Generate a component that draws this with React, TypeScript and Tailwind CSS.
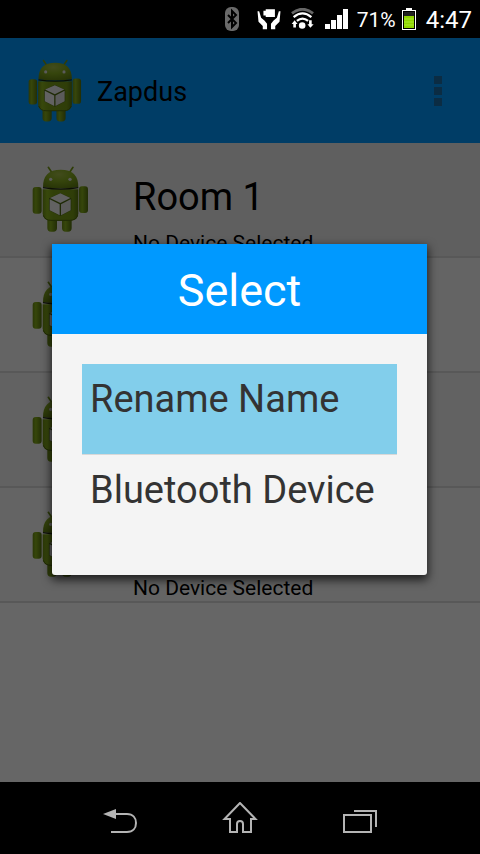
import React from "react";

type Room = { name?: string; status?: string };

const rooms: Room[] = [
  { name: "Room 1", status: "No Device Selected" },
  {},
  {},
  { status: "No Device Selected" },
];

function AndroidIcon({ className, id }: { className: string; id: string }) {
  const body = `body-${id}`;
  const limb = `limb-${id}`;
  const head = `head-${id}`;
  return (
    <svg viewBox="97 79 171 201" className={className} aria-hidden="true">
      <defs>
        <linearGradient id={body} x1="0" x2="1" y1="0" y2="0">
          <stop offset="0" stopColor="#6c8c14" />
          <stop offset="0.12" stopColor="#8cb41e" />
          <stop offset="0.3" stopColor="#7ca018" />
          <stop offset="0.85" stopColor="#769a16" />
          <stop offset="1" stopColor="#56720e" />
        </linearGradient>
        <linearGradient id={limb} x1="0" x2="1" y1="0" y2="0">
          <stop offset="0" stopColor="#6c8c14" />
          <stop offset="0.35" stopColor="#88b01c" />
          <stop offset="1" stopColor="#56720e" />
        </linearGradient>
        <radialGradient id={head} cx="0.45" cy="0.25" r="0.8">
          <stop offset="0" stopColor="#a4bc48" />
          <stop offset="0.45" stopColor="#86ac20" />
          <stop offset="1" stopColor="#628012" />
        </radialGradient>
      </defs>
      <path d="M146 83l10 15M220 83l-10 15" stroke="#769a16" strokeWidth="5" strokeLinecap="round" />
      <rect x="143" y="222" width="29" height="54" rx="11" fill={`url(#${limb})`} />
      <rect x="187" y="222" width="29" height="54" rx="11" fill={`url(#${limb})`} />
      <rect x="99" y="142" width="27" height="80" rx="9" fill={`url(#${limb})`} />
      <rect x="238" y="140" width="27" height="80" rx="9" fill={`url(#${limb})`} />
      <path d="M129 149h107v72q0 22-24 22h-58q-25 0-25-22z" fill={`url(#${body})`} />
      <path d="M131 227q5 15 23 15h57q18 0 23-15" fill="none" stroke="#4e680c" strokeWidth="3" />
      <path d="M130 142q0-52 53-52t53 52q-53 9-106 0z" fill={`url(#${head})`} />
      <path d="M130 144q53 9 106 0" fill="none" stroke="#1d2608" strokeWidth="4" />
      <circle cx="153" cy="119" r="5" fill="#e0e0e0" />
      <circle cx="211" cy="119" r="5" fill="#e0e0e0" />
      <path d="M182 160l33 16v36l-33 17-34-17v-36z" fill="#4e6a10" />
      <path d="M182 161l30 14-30 15-31-15z" fill="#f0f0f0" />
      <path d="M150 179l30 15v33l-30-15z" fill="#f4f4f4" />
      <path d="M213 179l-29 15v33l29-15z" fill="#e4e4e4" />
    </svg>
  );
}

function StatusBar() {
  return (
    <header className="flex h-[38px] shrink-0 items-center justify-end bg-black pr-2 text-white">
      <svg viewBox="0 0 14 24" className="mr-[18px] h-6 w-3.5" aria-label="Bluetooth">
        <rect width="14" height="24" rx="6" fill="#6a6a6a" />
        <path d="M3 8l8 8-4 4V4l4 4-8 8" fill="none" stroke="#000" strokeWidth="2" />
      </svg>
      <svg viewBox="170 28 72 64" className="mr-2.5 h-[21px] w-6" aria-label="Ultra data">
        <path d="M189 33h7v-4h28v23h-28v-4h-7z" fill="#fff" />
        <path d="M171 35h5l6 20 10 8 8 10v17h-13v-10l-13-13z" fill="#fff" />
        <path d="M241 35h-5l-6 20-10 8-8 10v17h13v-10l13-13z" fill="#fff" />
      </svg>
      <svg viewBox="270 24 70 66" className="mr-[11px] h-[22px] w-[23px]" aria-label="Wi-Fi">
        <path d="M273 40q32-25 64 0" fill="none" stroke="#666" strokeWidth="9" />
        <path d="M278 51q27-22 54 0M288 63q17-14 34 0" fill="none" stroke="#fff" strokeWidth="7" />
        <circle cx="304" cy="77" r="10" fill="#fff" />
        <path d="M281 61l9 11h-5v11h-8V72h-5zM329 84l-9-11h5V61h8v12h6z" fill="#fff" />
      </svg>
      <svg viewBox="0 0 23 20" className="mr-[9px] h-5 w-[23px]" aria-label="Signal">
        <path d="M0 15h5v5H0zM6 11h5v9H6zM12 6h5v14h-5zM18 0h5v20h-5z" fill="#fff" />
      </svg>
      <span className="mr-1.5 pt-0.5 text-[21px] leading-6">71%</span>
      <svg viewBox="0 0 14 22" className="mr-2.5 h-[22px] w-3.5" aria-label="Battery">
        <path d="M4 0h6v2h4v20H0V2h4z" fill="#fff" />
        <path d="M1 3h12v18H1z" fill="#000" />
        <path d="M2 4h10v4H2z" fill="#222" />
        <path d="M2 8h10v12H2z" fill="#8fd400" />
        <path d="M2 11h10M2 14h10M2 17h10" stroke="#a8e62e" strokeWidth="1" />
      </svg>
      <time className="pt-0.5 text-2xl leading-6">4:47</time>
    </header>
  );
}

function AppBar() {
  return (
    <div className="flex h-[105px] items-center bg-[#0099ff] pl-7 pr-[38px]">
      <AndroidIcon id="app" className="h-[64px] w-[54px]" />
      <h1 className="ml-[15px] pt-0.5 text-[27px] leading-8 text-black">Zapdus</h1>
      <button type="button" aria-label="More options" className="ml-auto flex flex-col gap-[3px]">
        <span className="size-2 bg-[#1c6ea8]" />
        <span className="size-2 bg-[#1c6ea8]" />
        <span className="size-2 bg-[#1c6ea8]" />
      </button>
    </div>
  );
}

function RoomList() {
  return (
    <ul>
      {rooms.map((room, i) => (
        <li
          key={i}
          className="flex h-[115px] items-start border-b-2 border-[#dcdcdc] bg-[#f4f4f4] pl-8 first:bg-[#eeeeee] even:bg-[#fafafa]"
        >
          <AndroidIcon id={`room-${i}`} className="mt-[23px] h-[67px] w-[57px]" />
          <div className="ml-11 pt-8 text-black">
            <h2 className="h-[44px] text-[38px] leading-[44px]">{room.name}</h2>
            <p className="mt-[11px] text-[21px] leading-[26px]">{room.status}</p>
          </div>
        </li>
      ))}
    </ul>
  );
}

function SelectDialog() {
  return (
    <div className="absolute inset-0 flex items-center bg-black/60 pb-0.5 pl-[52px] pr-[53px]">
      <div
        role="dialog"
        aria-labelledby="dialog-title"
        className="flex-1 overflow-hidden rounded-b-[3px] bg-[#f4f4f4] shadow-[0_4px_10px_1px_rgba(0,0,0,0.7)]"
      >
        <h2
          id="dialog-title"
          className="flex h-[90px] items-center justify-center bg-[#0099ff] pt-1 text-[45px] leading-[52px] text-white"
        >
          Select
        </h2>
        <div className="flex flex-col divide-y divide-[#d8d8d8] p-[30px] text-[38px] leading-[44px] text-[#333333]">
          <button type="button" className="h-[91px] bg-[#82ceeb] px-2 pb-5 text-left">
            Rename Name
          </button>
          <button type="button" className="h-[90px] px-2 pb-5 text-left">
            Bluetooth Device
          </button>
        </div>
      </div>
    </div>
  );
}

function NavBar() {
  return (
    <nav className="flex h-[72px] shrink-0 items-center justify-center gap-[84px] bg-black pt-1 text-[#b4b4b4]">
      <button type="button" aria-label="Back">
        <svg viewBox="0 0 36 36" className="size-9" fill="none" stroke="currentColor" strokeWidth="2">
          <path d="M13 12h12c6 0 9 4 9 9s-3 9-9 9H9" />
          <path d="M1 12l13-5v10z" fill="currentColor" stroke="none" />
        </svg>
      </button>
      <button type="button" aria-label="Home">
        <svg viewBox="0 0 36 36" className="size-9" fill="none" stroke="currentColor" strokeWidth="2">
          <path d="M18 1L2.500 17H8V30h7v-8q0-3 3-3t3 3v8h8V17h4.500z" />
        </svg>
      </button>
      <button type="button" aria-label="Recent apps">
        <svg viewBox="0 0 36 36" className="size-9" fill="none" stroke="currentColor" strokeWidth="2">
          <path d="M2 13h27v17H2zM12 9h22v16" />
        </svg>
      </button>
    </nav>
  );
}

export default function App() {
  return (
    <div className="flex min-h-screen flex-col bg-black font-[Roboto,sans-serif]">
      <StatusBar />
      <main className="relative flex-1 bg-white">
        <AppBar />
        <RoomList />
        <SelectDialog />
      </main>
      <NavBar />
    </div>
  );
}
